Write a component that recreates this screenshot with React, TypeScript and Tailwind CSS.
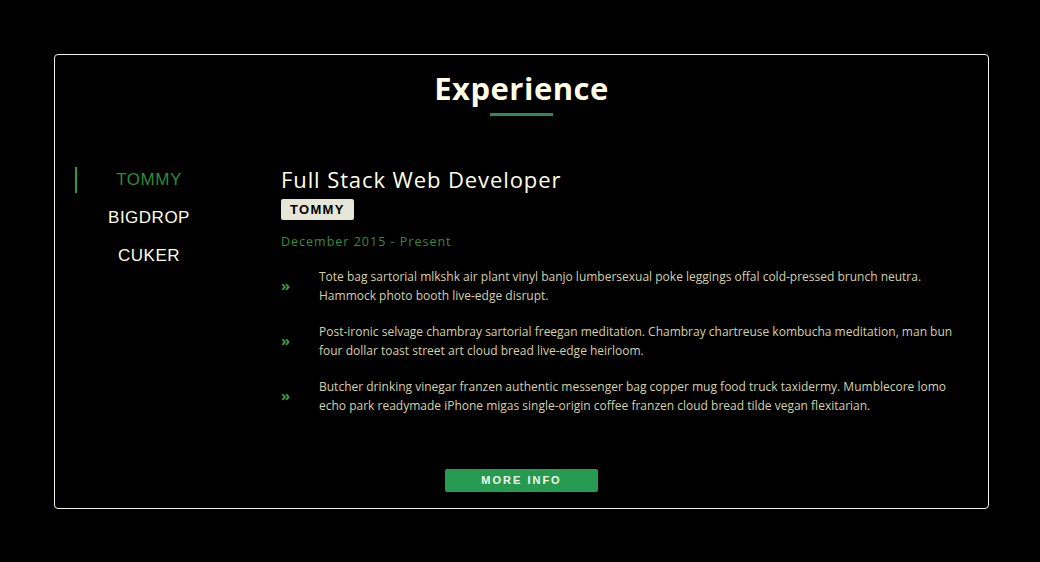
import type React from "react"

const items = [
  "Tote bag sartorial mlkshk air plant vinyl banjo lumbersexual poke leggings offal cold-pressed brunch neutra. Hammock photo booth live-edge disrupt.",
  "Post-ironic selvage chambray sartorial freegan meditation. Chambray chartreuse kombucha meditation, man bun four dollar toast street art cloud bread live-edge heirloom.",
  "Butcher drinking vinegar franzen authentic messenger bag copper mug food truck taxidermy. Mumblecore lomo echo park readymade iPhone migas single-origin coffee franzen cloud bread tilde vegan flexitarian.",
]

const App: React.FC = () => {
  return (
    <div className="min-h-[562px] w-full bg-black pl-[54px] pt-[54px]">
      <div className="w-[935px] h-[455px] border border-[#f2f2e6] rounded-[4px] flex flex-col">
        <div className="flex flex-col items-center pt-[13px]">
          <h1
            className="text-[31px] leading-[40px] font-bold text-[#fffde6] tracking-[0.5px]"
            style={{ fontFamily: '"Open Sans", sans-serif' }}
          >
            Experience
          </h1>
          <div className="w-[63px] h-[3px] bg-[#2e8b57] mt-[5px]" />
        </div>

        <div className="flex mt-[49px] pl-[20px] pr-[30px]">
          <ul className="w-[146px] mt-[2px] flex flex-col gap-[12px]" style={{ fontFamily: '"Liberation Sans", Arial, sans-serif' }}>
            {["TOMMY", "BIGDROP", "CUKER"].map((name, i) => (
              <li
                key={name}
                className={`h-[26px] flex items-center justify-center text-[17px] tracking-[0.5px] ${
                  i === 0 ? "border-l-2 border-[#2e9a3e] text-[#2e8b3a]" : "border-l-2 border-transparent text-[#fffde6]"
                }`}
              >
                {name}
              </li>
            ))}
          </ul>

          <div className="flex-1 ml-[60px]" style={{ fontFamily: '"Open Sans", sans-serif' }}>
            <h2 className="text-[22px] leading-[28px] text-[#fffde6] tracking-[0.9px]">Full Stack Web Developer</h2>
            <span
              className="inline-block mt-[6px] h-[21px] leading-[21px] px-[9px] rounded-[2px] bg-[#e6e6d8] text-black text-[13px] font-bold tracking-[1.3px]"
              style={{ fontFamily: '"Liberation Sans", Arial, sans-serif' }}
            >
              TOMMY
            </span>
            <p className="mt-[13px] text-[12.5px] leading-[18px] text-[#3b8a3b] tracking-[1px]">December 2015 - Present</p>

            <ul className="mt-[16px] flex flex-col gap-[17px]">
              {items.map((t) => (
                <li key={t} className="flex items-center">
                  <span className="w-[38px] shrink-0 text-[#3f9a3f] text-[15px] font-bold leading-none pb-[2px]">»</span>
                  <p className="text-[12px] leading-[19px] text-[#d6d1a8]">{t}</p>
                </li>
              ))}
            </ul>
          </div>
        </div>

        <div className="mt-auto mb-[16px] flex justify-center">
          <button
            className="w-[153px] h-[23px] rounded-[2px] bg-[#269a50] text-[#f4fbe8] text-[11px] font-bold tracking-[2px]"
            style={{ fontFamily: '"Liberation Sans", Arial, sans-serif' }}
          >
            MORE INFO
          </button>
        </div>
      </div>
    </div>
  )
}

export default App
